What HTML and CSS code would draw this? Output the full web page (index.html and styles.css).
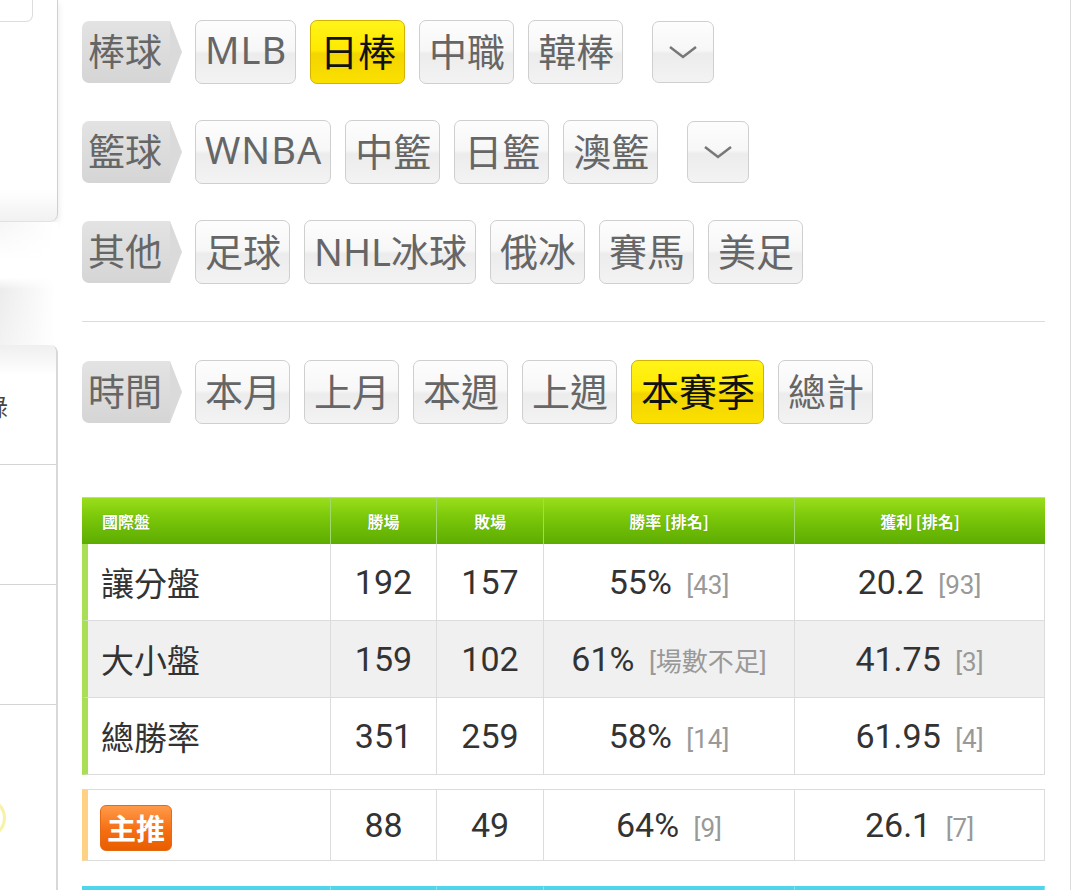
FILE: index.html
```html
<!DOCTYPE html>
<html lang="zh-Hant">
<head>
    <meta charset="UTF-8">
    <meta name="viewport" content="width=device-width, initial-scale=1.0">
    <title>戰績統計</title>
    <link rel="stylesheet" href="styles.css">
</head>
<body>
<div class="page">
    <aside class="sidebar">
        <div class="side-top"><div class="side-tab"></div></div>
        <div class="side-gap"></div>
        <div class="side-list">
            <div class="side-item"><span class="side-text">錄</span></div>
            <div class="side-item"></div>
            <div class="side-item"></div>
            <div class="side-item last"><span class="side-dot"></span></div>
        </div>
    </aside>

    <main class="content">
        <div class="filter-row">
            <span class="tag">棒球</span>
            <button class="chip latin">MLB</button>
            <button class="chip active">日棒</button>
            <button class="chip">中職</button>
            <button class="chip">韓棒</button>
            <button class="chip more"><svg width="30" height="14" viewBox="0 0 30 14"><polyline points="2,2 15,12 28,2" fill="none" stroke="#777" stroke-width="2.5"/></svg></button>
        </div>
        <div class="filter-row">
            <span class="tag">籃球</span>
            <button class="chip latin">WNBA</button>
            <button class="chip">中籃</button>
            <button class="chip">日籃</button>
            <button class="chip">澳籃</button>
            <button class="chip more"><svg width="30" height="14" viewBox="0 0 30 14"><polyline points="2,2 15,12 28,2" fill="none" stroke="#777" stroke-width="2.5"/></svg></button>
        </div>
        <div class="filter-row">
            <span class="tag">其他</span>
            <button class="chip">足球</button>
            <button class="chip">NHL冰球</button>
            <button class="chip">俄冰</button>
            <button class="chip">賽馬</button>
            <button class="chip">美足</button>
        </div>

        <div class="divider"></div>

        <div class="filter-row">
            <span class="tag">時間</span>
            <button class="chip">本月</button>
            <button class="chip">上月</button>
            <button class="chip">本週</button>
            <button class="chip">上週</button>
            <button class="chip active">本賽季</button>
            <button class="chip">總計</button>
        </div>

        <table class="stats">
            <colgroup><col class="c1"><col class="c2"><col class="c3"><col class="c4"><col class="c5"></colgroup>
            <thead>
                <tr><th class="first">國際盤</th><th>勝場</th><th>敗場</th><th>勝率 [排名]</th><th>獲利 [排名]</th></tr>
            </thead>
            <tbody>
                <tr><td class="first">讓分盤</td><td>192</td><td>157</td><td>55% <span class="rank">[43]</span></td><td>20.2 <span class="rank">[93]</span></td></tr>
                <tr class="alt"><td class="first">大小盤</td><td>159</td><td>102</td><td>61% <span class="rank">[場數不足]</span></td><td>41.75 <span class="rank">[3]</span></td></tr>
                <tr><td class="first">總勝率</td><td>351</td><td>259</td><td>58% <span class="rank">[14]</span></td><td>61.95 <span class="rank">[4]</span></td></tr>
            </tbody>
        </table>

        <table class="stats pick">
            <colgroup><col class="c1"><col class="c2"><col class="c3"><col class="c4"><col class="c5"></colgroup>
            <tbody>
                <tr><td class="first"><span class="badge">主推</span></td><td>88</td><td>49</td><td>64% <span class="rank">[9]</span></td><td>26.1 <span class="rank">[7]</span></td></tr>
            </tbody>
        </table>

        <table class="stats next">
            <colgroup><col class="c1"><col class="c2"><col class="c3"><col class="c4"><col class="c5"></colgroup>
            <thead>
                <tr><th class="first"></th><th></th><th></th><th></th><th></th></tr>
            </thead>
        </table>
    </main>
</div>
</body>
</html>
```

FILE: styles.css
```css
html, body {
    margin: 0;
    height: 890px;
    overflow: hidden;
    background: #fff;
}
body {
    font-family: "Noto Sans", "Noto Sans CJK TC", sans-serif;
    color: #333;
}
.page {
    display: flex;
    align-items: flex-start;
}

/* left column */
.sidebar {
    width: 58px;
    flex-shrink: 0;
}
.side-top {
    height: 222px;
    box-sizing: border-box;
    border-right: 1px solid #d0d0d0;
    border-bottom: 1px solid #e2e2e2;
    border-bottom-right-radius: 8px;
    background: linear-gradient(to bottom, #fff 86%, #f1f1f1 100%);
    box-shadow: 1px 3px 6px rgba(0, 0, 0, 0.08);
}
.side-tab {
    width: 33px;
    height: 22px;
    box-sizing: border-box;
    border: 1px solid #ddd;
    border-top: none;
    border-left: none;
    border-bottom-right-radius: 7px;
}
.side-gap {
    height: 123px;
    background:
        linear-gradient(to right, rgba(255,255,255,0) 0%, #fff 95%),
        linear-gradient(to bottom, #f6f6f6 0%, #fff 30%, #fff 45%, #ececec 55%, #f2f2f2 100%);
}
.side-list {
    box-sizing: border-box;
    border-right: 2px solid #d8d8d8;
    border-top-right-radius: 8px;
    background: #fff;
    height: 545px;
}
.side-item {
    height: 120px;
    box-sizing: border-box;
    border-bottom: 1px solid #d4d4d4;
    display: flex;
    align-items: center;
    overflow: hidden;
}
.side-item:first-child {
    background: linear-gradient(to bottom, #efefef 0%, #fff 25%);
    border-top-right-radius: 8px;
}
.side-item.last {
    border-bottom: none;
    height: 185px;
    align-items: flex-start;
    padding-top: 93px;
}
.side-text {
    margin-left: -17px;
    font-size: 25px;
    color: #444;
}
.side-dot {
    display: block;
    width: 34px;
    height: 34px;
    margin-left: -34px;
    border-radius: 50%;
    border: 3px solid #f8f2a8;
}

/* main area */
.content {
    width: 963px;
    padding: 20px 25px 0 24px;
    border-right: 1px solid #dcdcdc;
    height: 870px;
}
.filter-row {
    display: flex;
    align-items: center;
    gap: 14px;
    height: 64px;
    margin-bottom: 36px;
}
.filter-row:nth-child(3) {
    margin-bottom: 0;
}
.tag {
    position: relative;
    display: flex;
    align-items: center;
    box-sizing: border-box;
    width: 88px;
    height: 62px;
    padding: 0 0 5px 6px;
    margin-right: 11px;
    font-size: 37px;
    color: #666;
    background: linear-gradient(to bottom, #e3e3e3, #d5d5d5);
    border-radius: 7px 0 0 7px;
}
.tag::after {
    content: "";
    position: absolute;
    left: 100%;
    top: 0;
    border-top: 31px solid transparent;
    border-bottom: 31px solid transparent;
    border-left: 12px solid #dadada;
}
.chip {
    display: inline-flex;
    align-items: center;
    justify-content: center;
    box-sizing: border-box;
    height: 64px;
    padding: 0 8px 6px 9px;
    margin: 0;
    font-family: "Noto Sans", "Noto Sans CJK TC", sans-serif;
    font-size: 38px;
    color: #666;
    background: linear-gradient(to bottom, #fdfdfd 0%, #f7f7f7 47%, #ececec 53%, #f3f3f3 100%);
    border: 1px solid #cfcfcf;
    border-radius: 7px;
}
.chip.latin {
    letter-spacing: 1px;
}
.chip.active {
    color: #111;
    background: linear-gradient(to bottom, #fff41a 0%, #ffe900 47%, #f4d500 53%, #fae000 100%);
    border-color: #d3b200;
}
.chip.more {
    width: 62px;
    height: 62px;
    padding: 0;
    margin-left: 15px;
}
.divider {
    height: 1px;
    background: #dcdcdc;
    margin: 37px 0 38px;
}

/* tables */
.stats {
    width: 963px;
    table-layout: fixed;
    border-collapse: separate;
    border-spacing: 0;
    margin-top: 73px;
    font-family: Roboto, "Noto Sans CJK TC", sans-serif;
}
.c1 { width: 249px; }
.c2 { width: 106px; }
.c3 { width: 107px; }
.c4 { width: 251px; }
.c5 { width: 250px; }
.stats th {
    height: 46px;
    padding: 0;
    font-family: "Noto Sans CJK TC", sans-serif;
    font-size: 16px;
    font-weight: bold;
    color: #fff;
    text-shadow: 0 0 1px rgba(0, 80, 0, 0.4);
    background: linear-gradient(to bottom, #9ade1c 0%, #7cc80a 40%, #5dac02 100%);
    border-right: 1px solid #9fd96a;
    border-top: 1px solid #b5ea60;
}
.stats th:last-child {
    border-right: none;
}
.stats th.first {
    text-align: left;
    padding-left: 20px;
}
.stats td {
    height: 76px;
    padding: 0;
    text-align: center;
    font-size: 34px;
    color: #333;
    border-right: 1px solid #dcdcdc;
    border-bottom: 1px solid #dcdcdc;
}
.stats td.first {
    text-align: left;
    padding-left: 13px;
    font-family: "Noto Sans CJK TC", sans-serif;
    font-size: 33px;
    border-left: 6px solid #a8df55;
}
.stats tr.alt td {
    background: #f0f0f0;
}
.rank {
    margin-left: 6px;
    font-size: 26px;
    color: #999;
    font-family: Roboto, "Noto Sans CJK TC", sans-serif;
}
.stats.pick {
    margin-top: 14px;
}
.stats.pick td {
    height: 70px;
    border-top: 1px solid #dcdcdc;
}
.stats.pick td.first {
    border-left-color: #ffd184;
    padding-left: 12px;
}
.badge {
    display: inline-block;
    padding: 0 6px;
    height: 46px;
    line-height: 42px;
    box-sizing: border-box;
    font-size: 29px;
    font-weight: bold;
    color: #fff;
    background: linear-gradient(to bottom, #ff9a4a 0%, #f56f12 55%, #e85d00 100%);
    border: 1px solid #e56a14;
    border-radius: 6px;
    vertical-align: middle;
}
.stats.next {
    margin-top: 25px;
}
.stats.next th {
    background: linear-gradient(to bottom, #4fd6ec 0%, #3cc9e2 100%);
    border-top: 1px solid #4fd6ec;
    border-right: 1px solid #8fe3f0;
}
```
